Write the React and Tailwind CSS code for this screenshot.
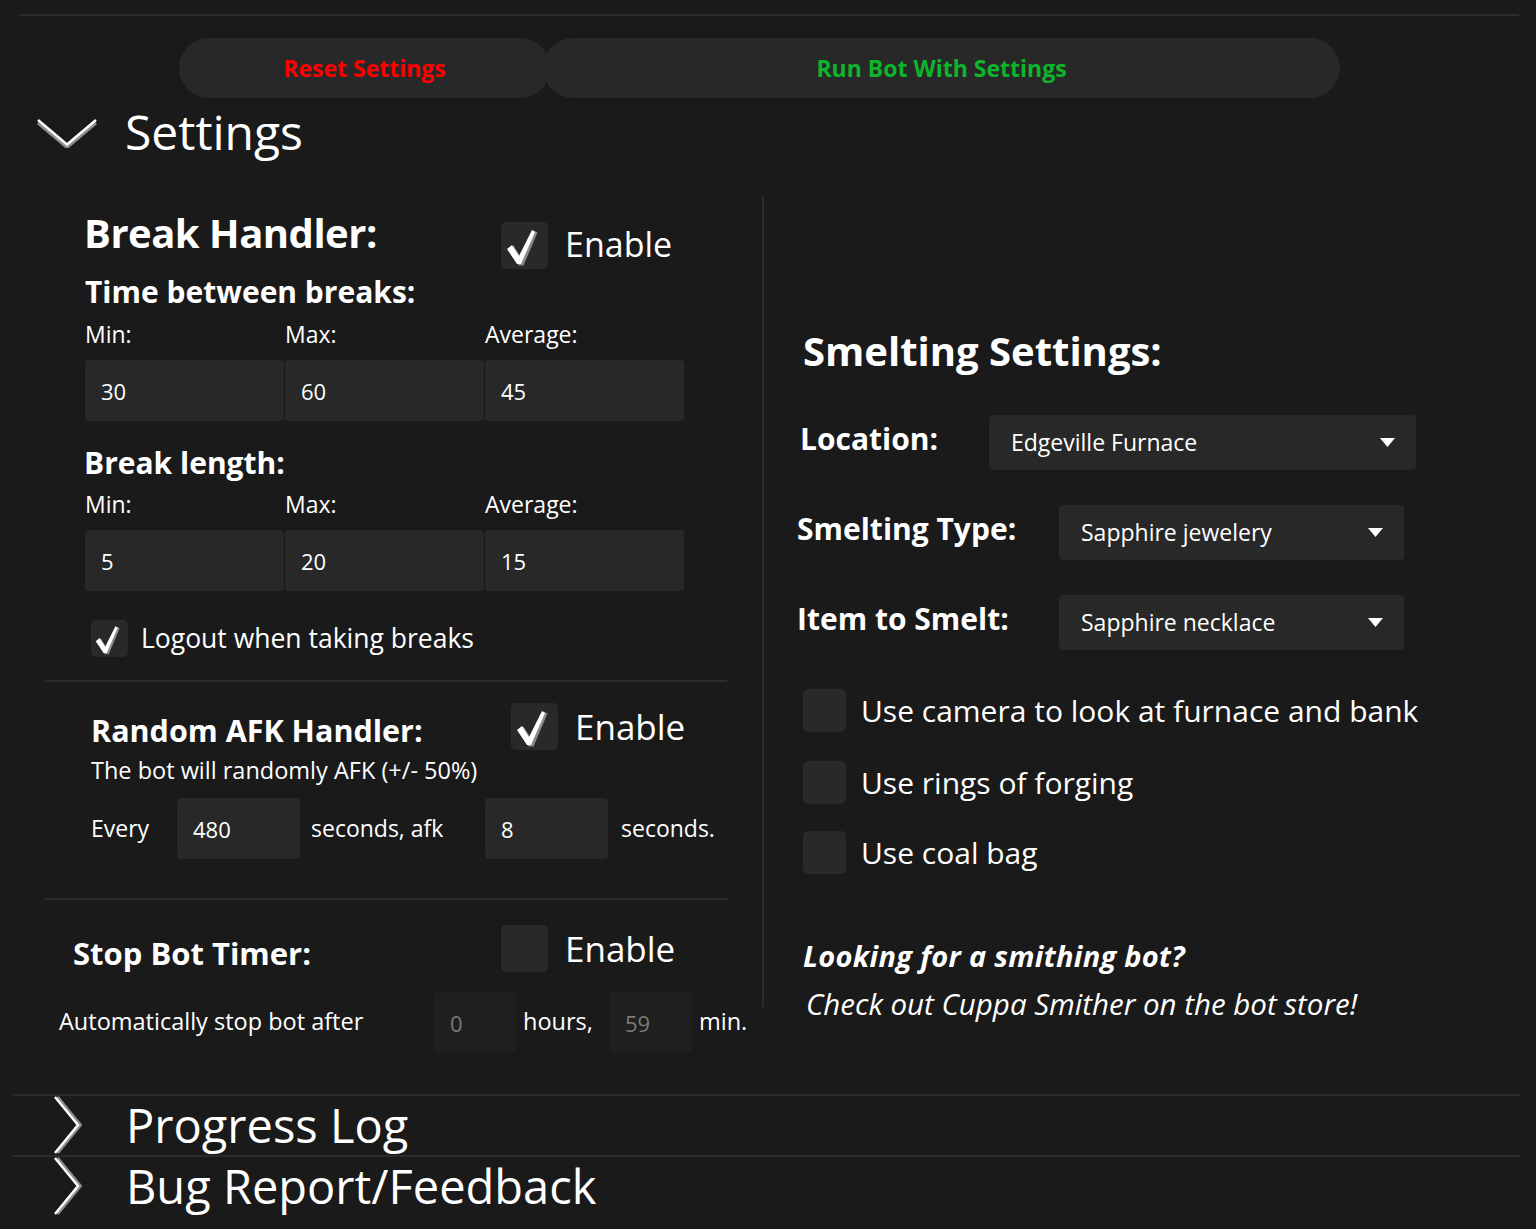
const FONT = "font-['Open_Sans','Lato',sans-serif]";

function CheckMark({ size }) {
  return (
    <svg width={size} height={size} viewBox="0 0 47 47">
      <polygon points="6,27 11,23 18,34 31,8 35,10 21,43 16,43" fill="#8a8a8a" transform="translate(1.5,0.5)" />
      <polygon points="6,27 11,23 18,34 31,8 34,10 20,42 16,42" fill="#ffffff" />
    </svg>
  );
}

function Box({ size, checked }) {
  return (
    <div
      className="shrink-0 rounded-[5px] bg-[#292929] flex items-center justify-center"
      style={{ width: size, height: size }}
    >
      {checked ? <CheckMark size={size} /> : null}
    </div>
  );
}

function Field({ value, w, dim }) {
  return (
    <div
      className={
        'shrink-0 h-[61px] rounded-[4px] flex items-center pl-[16px] pt-[1px] text-[22px] leading-none ' +
        (dim ? 'bg-[#1f1f1f] text-[#7a7a7a]' : 'bg-[#282828] text-white')
      }
      style={{ width: w }}
    >
      {value}
    </div>
  );
}

function TripleRow({ values }) {
  return (
    <div className="flex gap-[1px] pl-[40px] h-[61px]">
      {values.map((v, i) => (
        <Field key={i} value={v} w={199} />
      ))}
    </div>
  );
}

function LabelRow() {
  return (
    <div className="flex pl-[40px] text-[23px] leading-none h-[21px]">
      <span className="w-[200px]">Min:</span>
      <span className="w-[200px]">Max:</span>
      <span className="w-[200px]">Average:</span>
    </div>
  );
}

function Select({ label, w, labelW, value, labelClass }) {
  return (
    <div className="flex items-center h-[55px]">
      <div className={'shrink-0 text-[30px] font-bold leading-none mb-[7px] ' + labelClass} style={{ width: labelW }}>
        {label}
      </div>
      <div
        className="h-[55px] rounded-[4px] bg-[#282828] flex items-center justify-between pl-[22px] pr-[21px]"
        style={{ width: w }}
      >
        <span className="text-[23px] leading-none">{value}</span>
        <svg width="15" height="9" viewBox="0 0 15 9">
          <polygon points="0,0 15,0 7.5,9" fill="#fff" />
        </svg>
      </div>
    </div>
  );
}

function Chevron({ dir }) {
  if (dir === 'down') {
    return (
      <svg width="60" height="30" viewBox="0 0 60 30" className="shrink-0">
        <polyline points="1,3 30,27.5 59,3" fill="none" stroke="#8c8c8c" strokeWidth="3" transform="translate(0,2)" />
        <polyline points="1,2 30,26.5 59,2" fill="none" stroke="#ffffff" strokeWidth="2.5" />
      </svg>
    );
  }
  return (
    <svg width="28" height="58" viewBox="0 0 28 58" className="shrink-0">
      <polyline points="2,1 25,29 2,57" fill="none" stroke="#8c8c8c" strokeWidth="3" transform="translate(1.5,0)" />
      <polyline points="1,1 24,29 1,57" fill="none" stroke="#ffffff" strokeWidth="2.5" />
    </svg>
  );
}

export default function App() {
  return (
    <div className={'w-[1536px] h-[1229px] overflow-hidden bg-[#1a1a1a] text-white ' + FONT}>
      {/* top rule */}
      <div className="pt-[14px] pl-[19px]">
        <div className="h-[2px] w-[1500px] bg-[#2b2b2b]" />
      </div>

      {/* action buttons */}
      <div className="flex mt-[22px] pl-[179px] h-[60px]">
        <button className="w-[371px] h-[60px] rounded-full bg-[#282828] text-[#ff0000] font-bold text-[23px] leading-none">
          Reset Settings
        </button>
        <button className="-ml-[7px] w-[797px] h-[60px] rounded-full bg-[#282828] text-[#0db52b] font-bold text-[23px] leading-none">
          Run Bot With Settings
        </button>
      </div>

      {/* settings header */}
      <div className="h-[99px] flex items-start pl-[37px]">
        <div className="mt-[20px]">
          <Chevron dir="down" />
        </div>
        <div className="ml-[28px] mt-[10px] text-[48px] leading-none">Settings</div>
      </div>

      {/* main */}
      <div className="h-[897px] flex pl-[45px]">
        {/* left */}
        <div className="w-[682px] shrink-0">
          <div className="flex items-start mt-[16px] h-[55px] pl-[39px]">
            <div className="w-[417px] shrink-0 text-[40px] font-bold leading-none tracking-[-0.5px]">Break Handler:</div>
            <div className="mt-[9px]">
              <Box size={47} checked />
            </div>
            <div className="ml-[17px] mt-[14px] text-[34px] leading-none">Enable</div>
          </div>
          <div className="mt-[9px] pl-[40px] text-[30px] font-bold leading-none">Time between breaks:</div>
          <div className="mt-[16px]">
            <LabelRow />
          </div>
          <div className="mt-[16px]">
            <TripleRow values={['30', '60', '45']} />
          </div>
          <div className="mt-[27px] pl-[39px] text-[30px] font-bold leading-none">Break length:</div>
          <div className="mt-[15px]">
            <LabelRow />
          </div>
          <div className="mt-[16px]">
            <TripleRow values={['5', '20', '15']} />
          </div>
          <div className="mt-[28px] pl-[46px] flex items-center h-[38px]">
            <Box size={37} checked />
            <span className="ml-[13px] text-[26.5px] leading-none">Logout when taking breaks</span>
          </div>

          <div className="mt-[23px] h-[2px] bg-[#2b2b2b]" />

          <div className="flex items-start mt-[21px] h-[47px] pl-[46px]">
            <div className="w-[420px] shrink-0 mt-[12px] text-[30.5px] font-bold leading-none">Random AFK Handler:</div>
            <Box size={47} checked />
            <div className="ml-[17px] mt-[6px] text-[35px] leading-none">Enable</div>
          </div>
          <div className="mt-[9px] pl-[46px] text-[23.5px] leading-none">The bot will randomly AFK (+/- 50%)</div>
          <div className="mt-[15px] h-[61px] flex items-center pl-[46px] text-[23px] leading-none">
            <span className="w-[86px] shrink-0">Every</span>
            <Field value="480" w={123} />
            <span className="w-[185px] shrink-0 pl-[11px]">seconds, afk</span>
            <Field value="8" w={123} />
            <span className="ml-[13px]">seconds.</span>
          </div>

          <div className="mt-[39px] h-[2px] bg-[#2b2b2b]" />

          <div className="flex items-start mt-[25px] h-[47px] pl-[28px]">
            <div className="w-[428px] shrink-0 mt-[13px] text-[31px] font-bold leading-none">Stop Bot Timer:</div>
            <Box size={47} />
            <div className="ml-[17px] mt-[6px] text-[35px] leading-none">Enable</div>
          </div>
          <div className="mt-[20px] h-[61px] flex items-center pl-[14px] text-[23.5px] leading-none">
            <span className="w-[375px] shrink-0">Automatically stop bot after</span>
            <Field value="0" w={82} dim />
            <span className="w-[93px] shrink-0 pl-[7px]">hours,</span>
            <Field value="59" w={83} dim />
            <span className="ml-[7px]">min.</span>
          </div>
        </div>

        {/* divider */}
        <div className="ml-[35px] w-[2px] h-[810px] bg-[#2b2b2b] shrink-0" />

        {/* right */}
        <div className="ml-[33px] flex-1">
          <div className="mt-[134px] pl-[6px] text-[40px] font-bold leading-none">Smelting Settings:</div>
          <div className="mt-[44px]">
            <Select label="Location:" labelW={192} labelClass="pl-[3px]" w={427} value="Edgeville Furnace" />
          </div>
          <div className="mt-[35px]">
            <Select label="Smelting Type:" labelW={262} labelClass="" w={345} value="Sapphire jewelery" />
          </div>
          <div className="mt-[35px]">
            <Select label="Item to Smelt:" labelW={262} labelClass="" w={345} value="Sapphire necklace" />
          </div>

          <div className="mt-[39px] pl-[6px] flex items-center h-[43px]">
            <Box size={43} />
            <span className="ml-[15px] text-[30px] leading-none">Use camera to look at furnace and bank</span>
          </div>
          <div className="mt-[29px] pl-[6px] flex items-center h-[43px]">
            <Box size={43} />
            <span className="ml-[15px] text-[30px] leading-none">Use rings of forging</span>
          </div>
          <div className="mt-[27px] pl-[6px] flex items-center h-[43px]">
            <Box size={43} />
            <span className="ml-[15px] text-[30px] leading-none">Use coal bag</span>
          </div>

          <div className="mt-[67px] pl-[6px] text-[29px] font-bold italic leading-none tracking-[0.3px]">Looking for a smithing bot?</div>
          <div className="mt-[19px] pl-[9px] text-[29.5px] italic leading-none">Check out Cuppa Smither on the bot store!</div>
        </div>
      </div>

      {/* collapsed sections */}
      <div className="pl-[13px]">
        <div className="h-[2px] w-[1507px] bg-[#2b2b2b]" />
      </div>
      <div className="h-[59px] flex items-start pl-[54px]">
        <Chevron dir="right" />
        <div className="ml-[44px] mt-[6px] text-[47px] leading-none">Progress Log</div>
      </div>
      <div className="pl-[13px]">
        <div className="h-[2px] w-[1507px] bg-[#2b2b2b]" />
      </div>
      <div className="h-[72px] flex items-start pl-[54px]">
        <Chevron dir="right" />
        <div className="ml-[44px] mt-[6px] text-[47px] leading-none">Bug Report/Feedback</div>
      </div>
    </div>
  );
}
